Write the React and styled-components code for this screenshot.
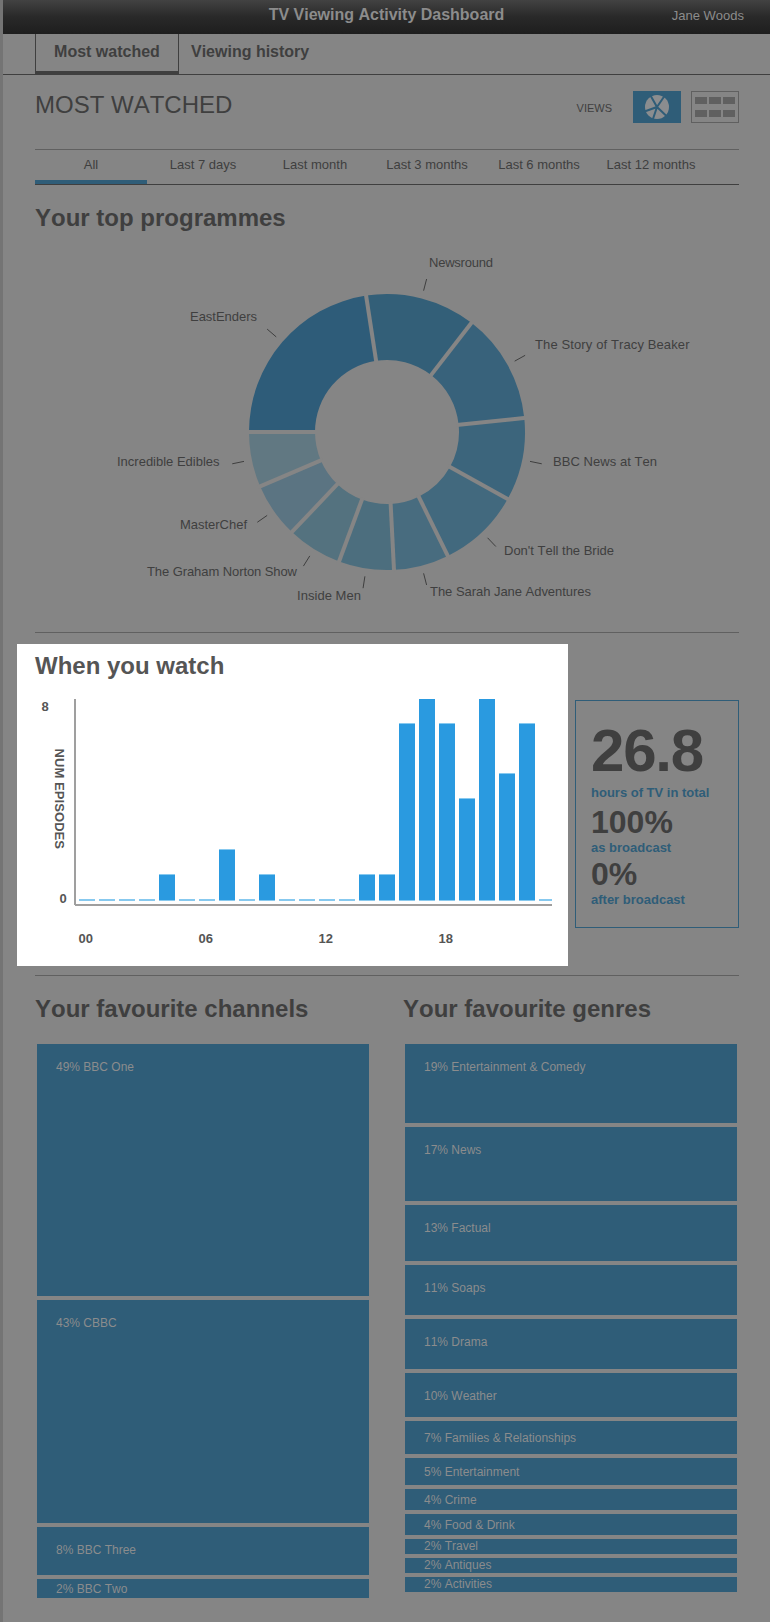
import React from "react";
import styled, { createGlobalStyle } from "styled-components";

const c = {
  page: "#858585",
  edge: "#747474",
  ink: "#3f3f3f",
  rule: "#606060",
  blue: "#2f5d78",
  pale: "#8b8c8d",
};

const GlobalStyle = createGlobalStyle`
  *, *::before, *::after { box-sizing: border-box; }
  body {
    margin: 0;
    background: ${c.page};
    color: ${c.ink};
    font-family: "Liberation Sans", Arial, sans-serif;
    font-size: 13px;
    font-kerning: none;
  }
`;

const Page = styled.div`
  width: 770px;
  min-height: 1622px;
  border-left: 3px solid ${c.edge};
  background: ${c.page};
`;

const TopBar = styled.header`
  display: grid;
  grid-template-columns: 1fr auto 1fr;
  height: 34px;
  padding: 0 26px;
  background: linear-gradient(#424242, #292929 50%, #1e1e1e);
  color: #8c8c8c;
`;

const AppTitle = styled.div`
  grid-column: 2;
  font-size: 16px;
  font-weight: bold;
  line-height: 29px;
`;

const UserName = styled.div`
  justify-self: end;
  line-height: 31px;
`;

const Nav = styled.nav`
  display: flex;
  height: 41px;
  padding-left: 32px;
  border-bottom: 1px solid ${c.ink};
`;

const NavTab = styled.a`
  width: ${(p) => (p.$active ? "144px" : "auto")};
  height: 40px;
  padding-left: ${(p) => (p.$active ? 0 : 12)}px;
  border: solid ${c.ink};
  border-width: ${(p) => (p.$active ? "0 1px 3px" : 0)};
  text-align: center;
  font-size: 16px;
  font-weight: bold;
  line-height: 35px;
`;

const Content = styled.main`
  width: 704px;
  margin-left: 32px;
`;

const TitleRow = styled.div`
  display: flex;
  align-items: flex-start;
  height: 74px;
  padding-top: 16px;
`;

const Title = styled.h1`
  flex: 1;
  margin: 0;
  font-size: 24px;
  font-weight: normal;
  line-height: 28px;
`;

const ViewsLabel = styled.span`
  margin-right: 21px;
  font-size: 11px;
  line-height: 34px;
`;

const ViewButton = styled.button`
  display: block;
  width: 48px;
  height: 32px;
  padding: 0;
  margin-left: ${(p) => (p.$active ? 0 : 10)}px;
  border: 1px solid ${(p) => (p.$active ? c.blue : c.rule)};
  background: ${(p) => (p.$active ? c.blue : "transparent")};

  svg { display: block; }
`;

const Filters = styled.div`
  display: flex;
  height: 36px;
  border-top: 1px solid ${c.rule};
  border-bottom: 1px solid ${c.ink};
`;

const Filter = styled.a`
  width: 112px;
  height: 34px;
  border-bottom: 4px solid ${(p) => (p.$active ? c.blue : "transparent")};
  text-align: center;
  line-height: 29px;
`;

const Heading = styled.h2`
  margin: 0;
  font-size: 24px;
  font-weight: bold;
  line-height: 28px;
`;

const Section = styled.section`
  padding-top: 19px;
`;

const Chart = styled.svg`
  display: block;
  font-family: "Liberation Sans", Arial, sans-serif;
  font-size: 13px;
`;

const WatchRow = styled.section`
  display: flex;
  justify-content: space-between;
  align-items: flex-start;
  margin-left: -18px;
  padding: 11px 0 9px;
`;

const Divider = styled.hr`
  height: 1px;
  margin: 0;
  border: 0;
  background: ${c.rule};
`;

const Spotlight = styled.div`
  width: 551px;
  height: 322px;
  padding-top: 8px;
  background: #fff;
  color: #555;

  h2 { padding-left: 18px; }
`;

const StatBox = styled.aside`
  width: 164px;
  height: 228px;
  margin-top: 56px;
  padding: 21px 0 0 15px;
  border: 1px solid ${c.blue};
  font-weight: bold;
`;

const Figure = styled.div`
  font-size: ${(p) => (p.$large ? 60 : 32)}px;
  line-height: ${(p) => (p.$large ? 58 : 36)}px;
  letter-spacing: ${(p) => (p.$large ? "-1.2px" : "0")};
`;

const Caption = styled.div`
  height: ${(p) => p.$height}px;
  padding-top: ${(p) => p.$top}px;
  color: ${c.blue};
  line-height: 15px;
`;

const Favourites = styled.div`
  display: grid;
  grid-template-columns: 1fr 1fr;
  gap: 32px;
`;

const Stack = styled.div`
  display: flex;
  flex-direction: column;
  gap: 4px;
  margin: 21px 2px 0;
`;

const Block = styled.div`
  height: ${(p) => p.$height}px;
  padding: ${(p) => p.$top}px 0 0 19px;
  background: ${c.blue};
  color: ${c.pale};
  font-size: 12px;
  line-height: 14px;
`;

const filters = ["All", "Last 7 days", "Last month", "Last 3 months", "Last 6 months", "Last 12 months"];

// name, episodes, fill, label x, label baseline, label width
const programmes = [
  ["EastEnders", 7, "#2e5c79", 155, 89, 67],
  ["Newsround", 4, "#335f78", 394, 35, 64],
  ["The Story of Tracy Beaker", 4, "#38627b", 500, 117, 154.5],
  ["BBC News at Ten", 3, "#3c657c", 518, 234, 104],
  ["Don't Tell the Bride", 3, "#42697e", 469, 323, 110],
  ["The Sarah Jane Adventures", 2, "#486c7f", 395, 364, 161],
  ["Inside Men", 2, "#4c6e7e", 262, 368, 64],
  ["The Graham Norton Show", 2, "#54727f", 112, 344, 150],
  ["MasterChef", 2, "#5b7482", 145, 297, 67],
  ["Incredible Edibles", 2, "#617882", 82, 234, 102.5],
];

const CX = 352;
const CY = 200;
const at = (r, deg) => {
  const a = (deg * Math.PI) / 180;
  return [CX + r * Math.sin(a), CY - r * Math.cos(a)];
};

function Donut() {
  const total = programmes.reduce((s, p) => s + p[1], 0);
  let angle = -90;
  const slices = programmes.map((p) => {
    const start = angle;
    angle += (p[1] / total) * 360;
    return { p, start, end: angle, mid: (start + angle) / 2 };
  });
  return (
    <Chart width="704" height="400">
      {slices.map(({ p, start, end }) => (
        <path
          key={p[0]}
          fill={p[2]}
          d={`M${at(138, start)} A138 138 0 0 1 ${at(138, end)} L${at(72, end)} A72 72 0 0 0 ${at(72, start)}Z`}
        />
      ))}
      {slices.map(({ p, start, mid }) => {
        const [x1, y1] = at(70, start);
        const [x2, y2] = at(140, start);
        const [x3, y3] = at(146, mid);
        const [x4, y4] = at(158, mid);
        return (
          <g key={p[0]}>
            <line x1={x1} y1={y1} x2={x2} y2={y2} stroke={c.page} strokeWidth="4" />
            <line x1={x3} y1={y3} x2={x4} y2={y4} stroke={c.ink} />
            <text x={p[3]} y={p[4]} textLength={p[5]} fill={c.ink}>{p[0]}</text>
          </g>
        );
      })}
    </Chart>
  );
}

const hours = [0, 0, 0, 0, 1, 0, 0, 2, 0, 1, 0, 0, 0, 0, 1, 1, 7, 8, 7, 4, 8, 5, 7, 0];

function HoursChart() {
  return (
    <Chart width="551" height="286" fontWeight="bold" fill="#555">
      {hours.map((v, i) => {
        const x = 62 + i * 20;
        const w = Math.min(16, 535 - x);
        const top = v ? Math.max(19, Math.round(219 - v * 25.2)) : 219;
        return (
          <g key={i}>
            <rect x={x} y={top} width={w} height={221 - top} fill="#87c9ef" />
            {v > 0 && <rect x={x} y={v === 8 ? top : top + 1} width={w} height={220 - top - (v === 8 ? 0 : 1)} fill="#2a9ae0" />}
          </g>
        );
      })}
      <rect x="57" y="19" width="2" height="206" fill="#9f9f9f" />
      <rect x="58" y="224" width="477" height="2" fill="#9f9f9f" />
      <text x="24.5" y="31">8</text>
      <text x="42.5" y="223">0</text>
      <text transform="translate(38 68.5) rotate(90)" textLength="100.5">NUM EPISODES</text>
      {["00", "06", "12", "18"].map((t, i) => (
        <text key={t} x={61.5 + i * 120} y="263">{t}</text>
      ))}
    </Chart>
  );
}

// label, height, space above the label
const channels = [
  ["49% BBC One", 252, 16],
  ["43% CBBC", 223, 16],
  ["8% BBC Three", 48, 16],
  ["2% BBC Two", 19, 3],
];

const genres = [
  ["19% Entertainment & Comedy", 79, 16],
  ["17% News", 74, 16],
  ["13% Factual", 56, 16],
  ["11% Soaps", 50, 16],
  ["11% Drama", 50, 16],
  ["10% Weather", 44, 16],
  ["7% Families & Relationships", 33, 10],
  ["5% Entertainment", 27, 7],
  ["4% Crime", 21, 4],
  ["4% Food & Drink", 21, 4],
  ["2% Travel", 15, 0],
  ["2% Antiques", 15, 0],
  ["2% Activities", 15, 0],
];

const BlockList = ({ title, items }) => (
  <div>
    <Heading>{title}</Heading>
    <Stack>
      {items.map(([label, height, top]) => (
        <Block key={label} $height={height} $top={top}>{label}</Block>
      ))}
    </Stack>
  </div>
);

const PieIcon = () => (
  <svg width="46" height="30">
    <circle cx="23" cy="15" r="12" fill="#8b8d8f" />
    <path
      d="M23 15L16.5 3.5M23 15L30.5 4M23 15L33.5 25M23 15L18.8 27.5M23 15L10.5 19.5"
      stroke={c.blue}
      strokeWidth="2"
    />
  </svg>
);

const GridIcon = () => (
  <svg width="46" height="30" fill={c.rule}>
    {[5, 18].map((y) => [3, 17, 31].map((x) => (
      <rect key={`${x}-${y}`} x={x} y={y} width="12" height="7" />
    )))}
  </svg>
);

export default function App() {
  return (
    <Page>
      <GlobalStyle />
      <TopBar>
        <AppTitle>TV Viewing Activity Dashboard</AppTitle>
        <UserName>Jane Woods</UserName>
      </TopBar>
      <Nav>
        <NavTab $active>Most watched</NavTab>
        <NavTab>Viewing history</NavTab>
      </Nav>
      <Content>
        <TitleRow>
          <Title>MOST WATCHED</Title>
          <ViewsLabel>VIEWS</ViewsLabel>
          <ViewButton $active aria-label="Chart view"><PieIcon /></ViewButton>
          <ViewButton aria-label="Grid view"><GridIcon /></ViewButton>
        </TitleRow>
        <Filters>
          {filters.map((f, i) => <Filter key={f} $active={i === 0}>{f}</Filter>)}
        </Filters>
        <Section>
          <Heading>Your top programmes</Heading>
          <Donut />
        </Section>
        <Divider />
        <WatchRow>
          <Spotlight>
            <Heading>When you watch</Heading>
            <HoursChart />
          </Spotlight>
          <StatBox>
            <Figure $large>26.8</Figure>
            <Caption $height={24} $top={5}>hours of TV in total</Caption>
            <Figure>100%</Figure>
            <Caption $height={16} $top={0}>as broadcast</Caption>
            <Figure>0%</Figure>
            <Caption $height={16} $top={0}>after broadcast</Caption>
          </StatBox>
        </WatchRow>
        <Divider />
        <Section>
          <Favourites>
            <BlockList title="Your favourite channels" items={channels} />
            <BlockList title="Your favourite genres" items={genres} />
          </Favourites>
        </Section>
      </Content>
    </Page>
  );
}
